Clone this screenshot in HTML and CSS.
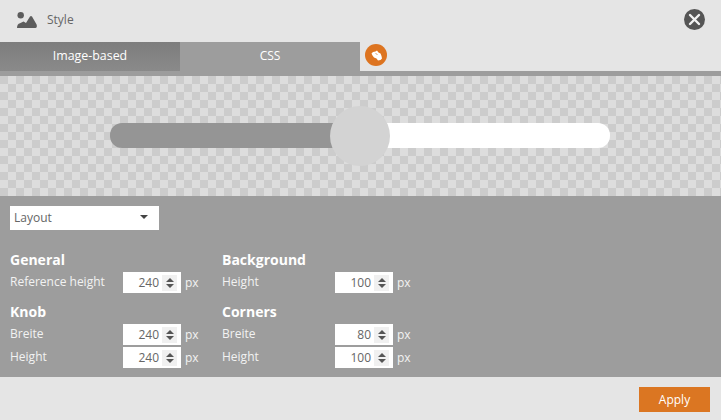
FILE: index.html
```html
<!DOCTYPE html>
<html>
<head>
    <link rel="stylesheet" href="styles.css">
</head>
<body>
    <div class="title-bar">
        <svg class="title-icon" width="20" height="16" viewBox="0 0 20 16">
            <circle cx="3.7" cy="3.2" r="3.2" fill="#5c5c5c"/>
            <path d="M0 16 Q0 12 3 11.2 L6.5 9.5 L9 11 L13 4.5 Q14 3.5 15 4.5 L19.6 12.5 Q20.5 16 18.5 16 Z" fill="#5c5c5c"/>
        </svg>
        <span class="title-text">Style</span>
        <svg class="close-icon" width="21" height="21" viewBox="0 0 21 21">
            <circle cx="10.5" cy="10.5" r="10.5" fill="#555"/>
            <path d="M6 6 L15 15 M15 6 L6 15" stroke="#f2f2f2" stroke-width="2.4" stroke-linecap="round"/>
        </svg>
    </div>
    <div class="tabs">
        <div class="tab tab-off">Image-based</div>
        <div class="tab tab-on">CSS</div>
        <div class="tab-help">
            <svg width="22" height="22" viewBox="0 0 22 22">
                <circle cx="11" cy="11" r="11" fill="#dd7420"/>
                <path d="M6.5 9.5 L8 8 L10.5 7.5 L12 6.5 L13.5 8.5 L15.5 9.5 L16.5 12 L17 14.5 L15.5 16 L13 16.5 L11.5 14.5 L9 13.5 L7.5 11.5 Z" fill="#fff"/>
                <path d="M10.5 9 L12.5 11" stroke="#dd7420" stroke-width="0.7"/>
            </svg>
        </div>
    </div>
    <div class="preview">
        <div class="slider">
            <div class="slider-fill"></div>
            <div class="slider-rest"></div>
            <div class="slider-knob"></div>
        </div>
    </div>
    <div class="panel">
        <div class="select">
            <span>Layout</span>
            <span class="select-arrow"></span>
        </div>
        <div class="columns">
            <div class="col col-left">
                <h3>General</h3>
                <div class="field">
                    <span class="field-label">Reference height</span>
                    <div class="num"><span class="num-value">240</span><span class="spin"><i class="up"></i><i class="down"></i></span></div>
                    <span class="unit">px</span>
                </div>
                <h3 class="second">Knob</h3>
                <div class="field">
                    <span class="field-label">Breite</span>
                    <div class="num"><span class="num-value">240</span><span class="spin"><i class="up"></i><i class="down"></i></span></div>
                    <span class="unit">px</span>
                </div>
                <div class="field">
                    <span class="field-label">Height</span>
                    <div class="num"><span class="num-value">240</span><span class="spin"><i class="up"></i><i class="down"></i></span></div>
                    <span class="unit">px</span>
                </div>
            </div>
            <div class="col">
                <h3>Background</h3>
                <div class="field">
                    <span class="field-label">Height</span>
                    <div class="num"><span class="num-value">100</span><span class="spin"><i class="up"></i><i class="down"></i></span></div>
                    <span class="unit">px</span>
                </div>
                <h3 class="second">Corners</h3>
                <div class="field">
                    <span class="field-label">Breite</span>
                    <div class="num"><span class="num-value">80</span><span class="spin"><i class="up"></i><i class="down"></i></span></div>
                    <span class="unit">px</span>
                </div>
                <div class="field">
                    <span class="field-label">Height</span>
                    <div class="num"><span class="num-value">100</span><span class="spin"><i class="up"></i><i class="down"></i></span></div>
                    <span class="unit">px</span>
                </div>
            </div>
        </div>
    </div>
    <div class="footer">
        <div class="apply">Apply</div>
    </div>
</body>
</html>
```

FILE: styles.css
```css
body {
    font-family: "Open Sans", sans-serif;
    margin: 0;
    width: 721px;
    height: 420px;
    overflow: hidden;
    background: #e5e5e5;
    font-size: 12px;
}
.title-bar {
    height: 42px;
    display: flex;
    align-items: center;
    padding: 0 16px 3px 17px;
    box-sizing: border-box;
}
.title-icon {
    margin: 1px 10px 0 0;
}
.title-text {
    color: #666;
    flex: 1;
}
.tabs {
    height: 29px;
    display: flex;
}
.tab {
    width: 180px;
    color: #fff;
    font-size: 12px;
    text-align: center;
    line-height: 28px;
}
.tab-off {
    background: linear-gradient(#7d7d7d, #8a8a8a);
    font-size: 12.4px;
}
.tab-on {
    background: #9d9d9d;
}
.tab-help {
    padding: 2px 0 0 5px;
}
.preview {
    height: 73px;
    padding: 47px 0 0 110px;
    border-top: 5px solid #9d9d9d;
    background-color: #ddd;
    background-image: conic-gradient(#ccc 25%, transparent 25% 50%, #ccc 50% 75%, transparent 75%);
    background-size: 16px 16px;
    background-position: 8px 0;
}
.slider {
    width: 500px;
    height: 25px;
    display: flex;
    position: relative;
}
.slider-fill {
    width: 50%;
    background: #959595;
    border-radius: 12px 0 0 12px;
}
.slider-rest {
    width: 50%;
    background: #fff;
    border-radius: 0 12px 12px 0;
}
.slider-knob {
    position: absolute;
    left: 220px;
    top: -17px;
    width: 60px;
    height: 60px;
    border-radius: 50%;
    background: #d3d3d3;
}
.panel {
    height: 181px;
    background: #9d9d9d;
    padding: 10px;
    box-sizing: border-box;
    color: #fff;
}
.select {
    width: 149px;
    height: 24px;
    background: #fff;
    color: #666;
    font-size: 12px;
    line-height: 24px;
    padding: 0 11px 0 4px;
    box-sizing: border-box;
    display: flex;
    justify-content: space-between;
    align-items: center;
}
.select-arrow {
    border-left: 4px solid transparent;
    border-right: 4px solid transparent;
    border-top: 4px solid #444;
    margin-top: -2px;
}
.columns {
    display: flex;
    margin-top: 20px;
}
.col-left {
    width: 212px;
}
.col h3 {
    margin: 0;
    font-size: 14px;
    line-height: 20px;
    font-weight: 700;
    color: #fff;
}
.col h3.second {
    margin-top: 9px;
}
.field {
    display: flex;
    align-items: center;
    height: 21px;
    margin-top: 2px;
    color: #f2f2f2;
    font-size: 12px;
}
.field-label {
    width: 113px;
    padding-bottom: 2px;
}
.num {
    width: 58px;
    height: 21px;
    background: #fff;
    display: flex;
    align-items: center;
    justify-content: flex-end;
    padding-right: 4px;
    box-sizing: border-box;
    color: #666;
    font-size: 12px;
}
.num-value {
    margin-right: 3px;
}
.spin {
    width: 15px;
    height: 16px;
    background: #f0f0f0;
    display: flex;
    flex-direction: column;
    align-items: center;
    justify-content: center;
    gap: 2px;
}
.spin i {
    display: block;
    border-left: 4px solid transparent;
    border-right: 4px solid transparent;
}
.spin .up {
    border-bottom: 4px solid #555;
}
.spin .down {
    border-top: 4px solid #555;
}
.unit {
    margin-left: 4px;
    font-size: 12px;
}
.footer {
    height: 43px;
    display: flex;
    justify-content: flex-end;
    align-items: flex-start;
    padding: 10px 11px 0 0;
    box-sizing: border-box;
}
.apply {
    width: 71px;
    height: 25px;
    background: #db7622;
    color: #fff;
    font-size: 12px;
    line-height: 25px;
    text-align: center;
}
```
